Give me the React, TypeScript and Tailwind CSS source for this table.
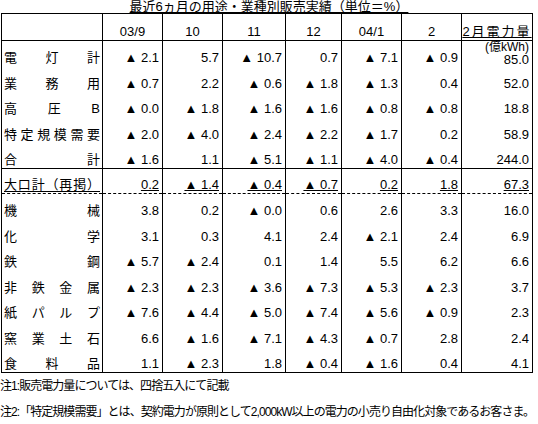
const colWidths = [
  "w-[101px]",
  "w-[60px]",
  "w-[60px]",
  "w-[63px]",
  "w-[56px]",
  "w-[60px]",
  "w-[60px]",
  "w-[71px]",
];

const headers = ["03/9", "10", "11", "12", "04/1", "2"];

type Row = {
  label: string[];
  values: string[];
  line?: "solid" | "dashed";
  underline?: boolean;
};

const rows: Row[] = [
  { label: ["電", "灯", "計"], values: ["▲ 2.1", "5.7", "▲ 10.7", "0.7", "▲ 7.1", "▲ 0.9", "85.0"] },
  { label: ["業", "務", "用"], values: ["▲ 0.7", "2.2", "▲ 0.6", "▲ 1.8", "▲ 1.3", "0.4", "52.0"] },
  { label: ["高", "圧", "B"], values: ["▲ 0.0", "▲ 1.8", "▲ 1.6", "▲ 1.6", "▲ 0.8", "▲ 0.8", "18.8"] },
  { label: ["特", "定", "規", "模", "需", "要"], values: ["▲ 2.0", "▲ 4.0", "▲ 2.4", "▲ 2.2", "▲ 1.7", "0.2", "58.9"] },
  { label: ["合", "計"], values: ["▲ 1.6", "1.1", "▲ 5.1", "▲ 1.1", "▲ 4.0", "▲ 0.4", "244.0"], line: "solid" },
  {
    label: ["大", "口", "計", "（", "再", "掲", "）"],
    values: ["0.2", "▲ 1.4", "▲ 0.4", "▲ 0.7", "0.2", "1.8", "67.3"],
    line: "dashed",
    underline: true,
  },
  { label: ["機", "械"], values: ["3.8", "0.2", "▲ 0.0", "0.6", "2.6", "3.3", "16.0"] },
  { label: ["化", "学"], values: ["3.1", "0.3", "4.1", "2.4", "▲ 2.1", "2.4", "6.9"] },
  { label: ["鉄", "鋼"], values: ["▲ 5.7", "▲ 2.4", "0.1", "1.4", "5.5", "6.2", "6.6"] },
  { label: ["非", "鉄", "金", "属"], values: ["▲ 2.3", "▲ 2.3", "▲ 3.6", "▲ 7.3", "▲ 5.3", "▲ 2.3", "3.7"] },
  { label: ["紙", "パ", "ル", "プ"], values: ["▲ 7.6", "▲ 4.4", "▲ 5.0", "▲ 7.4", "▲ 5.6", "▲ 0.9", "2.3"] },
  { label: ["窯", "業", "土", "石"], values: ["6.6", "▲ 1.6", "▲ 7.1", "▲ 4.3", "▲ 0.7", "2.8", "2.4"] },
  { label: ["食", "料", "品"], values: ["1.1", "▲ 2.3", "1.8", "▲ 0.4", "▲ 1.6", "0.4", "4.1"] },
];

export default function App() {
  return (
    <div className="w-[538px] h-[424px] overflow-hidden bg-white text-black font-['Liberation_Sans','Noto_Sans_CJK_JP',sans-serif] text-[13px] leading-[14px]">
      <div className="h-[13px] text-center">
        <span className="underline underline-offset-1">
          最近6ヵ月の用途・業種別販売実績（単位＝%）
        </span>
      </div>
      <table className="ml-px border-collapse table-fixed border border-black">
        <colgroup>
          {colWidths.map((w, i) => (
            <col key={i} className={w} />
          ))}
        </colgroup>
        <thead>
          <tr className="h-[27px] border-b border-black">
            <th className="border-r border-black" />
            {headers.map((h) => (
              <th
                key={h}
                className="border-r border-black align-bottom pb-px text-center font-normal"
              >
                {h}
              </th>
            ))}
            <th className="align-bottom pb-px text-center font-normal">
              <span className="underline underline-offset-1 tracking-[2px]">2月電力量</span>
            </th>
          </tr>
        </thead>
        <tbody>
          {rows.map((row, ri) => (
            <tr
              key={ri}
              className={
                row.line === "solid"
                  ? "h-[25.5px] border-b border-black"
                  : row.line === "dashed"
                  ? "h-[25.5px] border-b border-dashed border-black"
                  : "h-[25.5px]"
              }
            >
              <td className="border-r border-black align-bottom pb-px px-[2px]">
                <div
                  className={
                    row.underline
                      ? "flex justify-between border-b border-black leading-[13px]"
                      : "flex justify-between"
                  }
                >
                  {row.label.map((c, ci) => (
                    <span key={ci}>{c}</span>
                  ))}
                </div>
              </td>
              {row.values.map((v, vi) =>
                ri === 0 && vi === 6 ? (
                  <td key={vi} className="align-bottom pr-[3px] text-right whitespace-nowrap">
                    <div className="text-[12px] leading-[12px]">(億kWh)</div>
                    <div className="leading-[13px]">{v}</div>
                  </td>
                ) : (
                  <td
                    key={vi}
                    className={
                      vi < 6
                        ? "border-r border-black align-bottom pb-px pr-[3px] text-right whitespace-nowrap"
                        : "align-bottom pb-px pr-[3px] text-right whitespace-nowrap"
                    }
                  >
                    <div className={row.underline ? "underline underline-offset-1" : ""}>{v}</div>
                  </td>
                )
              )}
            </tr>
          ))}
        </tbody>
      </table>
      <div className="text-[12px] leading-[26px] tracking-[-0.95px] whitespace-nowrap">
        <div>注1:販売電力量については、四捨五入にて記載</div>
        <div>注2:「特定規模需要」とは、契約電力が原則として2,000kW以上の電力の小売り自由化対象であるお客さま。</div>
      </div>
    </div>
  );
}
